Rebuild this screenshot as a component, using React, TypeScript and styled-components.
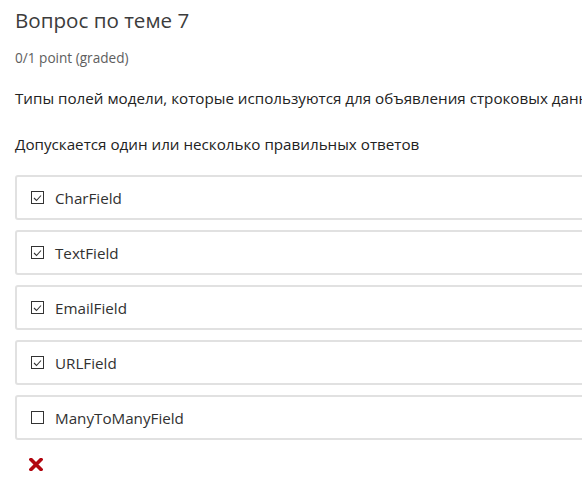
import React from "react";
import styled, { createGlobalStyle } from "styled-components";

const Global = createGlobalStyle`
  html, body { margin: 0; padding: 0; background: #fff; }
  body { font-family: "Open Sans", sans-serif; color: #313131; overflow: hidden; }
`;

const Page = styled.div`
  width: 760px;
  padding: 6px 15px 0 15px;
`;

const Title = styled.h3`
  margin: 0;
  font-size: 20.6px;
  font-weight: 400;
  line-height: 28px;
  color: #3c3c3c;
`;

const Points = styled.div`
  margin-top: 15px;
  font-size: 13.6px;
  line-height: 18px;
  color: #5e5e5e;
`;

const Para = styled.p<{ $top: number }>`
  margin: ${(p) => p.$top}px 0 0 0;
  font-size: 15.2px;
  line-height: 22px;
  color: #222;
  white-space: nowrap;
`;

const List = styled.div`
  margin-top: 20px;
  display: flex;
  flex-direction: column;
  gap: 10px;
`;

const Choice = styled.label`
  display: flex;
  align-items: center;
  gap: 11px;
  height: 41px;
  padding: 0 14px;
  border: 2px solid #e1e1e1;
  border-radius: 3px;
  font-size: 15.2px;
  color: #313131;
`;

const Box = styled.span`
  width: 11px;
  height: 11px;
  border: 1px solid #333;
  display: flex;
  align-items: center;
  justify-content: center;
  flex: none;
`;

const Status = styled.div`
  margin-top: 14px;
  padding-left: 14px;
`;

const items = [
  { t: "CharField", c: true },
  { t: "TextField", c: true },
  { t: "EmailField", c: true },
  { t: "URLField", c: true },
  { t: "ManyToManyField", c: false },
];

export default function App() {
  return (
    <Page>
      <Global />
      <Title>Вопрос по теме 7</Title>
      <Points>0/1 point (graded)</Points>
      <Para $top={20}>Типы полей модели, которые используются для объявления строковых данных</Para>
      <Para $top={24}>Допускается один или несколько правильных ответов</Para>
      <List>
        {items.map((it) => (
          <Choice key={it.t}>
            <Box>
              {it.c && (
                <svg width="9" height="8" viewBox="0 0 9 8">
                  <path d="M1 4 L3.5 6.5 L8 1.5" fill="none" stroke="#333" strokeWidth="1.1" />
                </svg>
              )}
            </Box>
            {it.t}
          </Choice>
        ))}
      </List>
      <Status>
        <svg width="14" height="13" viewBox="0 0 14 13">
          <path d="M2 1.5 L12 11.5 M12 1.5 L2 11.5" stroke="#b20610" strokeWidth="3.6" strokeLinecap="square" />
        </svg>
      </Status>
    </Page>
  );
}
